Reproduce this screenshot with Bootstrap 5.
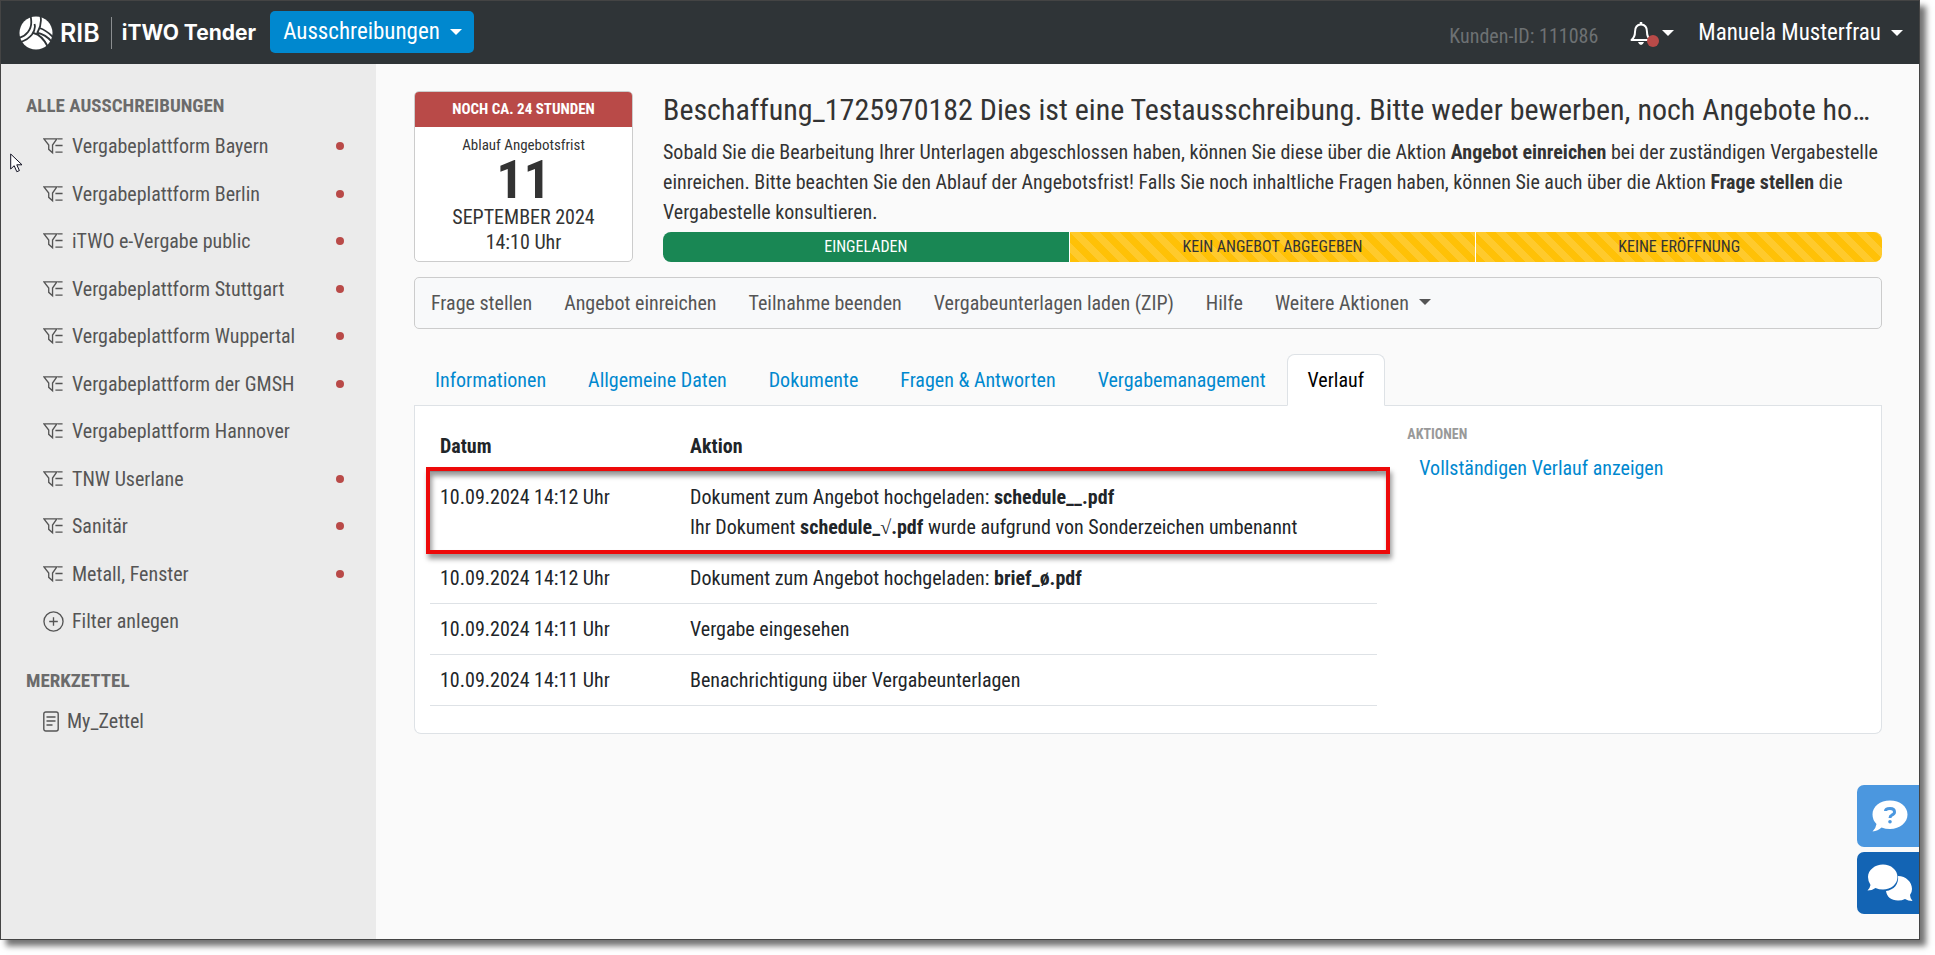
<!DOCTYPE html>
<html lang="de">
<head>
<meta charset="utf-8">
<meta name="viewport" content="width=device-width, initial-scale=1">
<title>iTWO Tender – Verlauf</title>
<link href="https://cdn.jsdelivr.net/npm/bootstrap@5.3.0/dist/css/bootstrap.min.css" rel="stylesheet">
<style>
  :root { --brand: #0088cf; --alarm: #b94a48; }
  html { font-size: 20px; }
  body {
    font-family: "Roboto Condensed", "Liberation Sans Narrow", Roboto, sans-serif;
    line-height: 30px; color: #333; background: #fff;
    min-height: 100vh; padding: 0 15px 15px 0;
  }
  a { color: var(--brand); text-decoration: none; }
  .window-frame { border: 1px solid #444; background: #fafafa; box-shadow: 6px 6px 6px rgba(0,0,0,.55); }
  .dropdown-toggle::after { margin-left: 10px; }

  .topbar { background: #2f3437; height: 63px; padding: 0 16px 0 18px; }
  .brand-rib { font: 600 25px/32px Inter, sans-serif; color: #fff; margin-left: 7px; }
  .brand-product { font: 700 21px/32px Inter, sans-serif; color: #fff; border-left: 1px solid #8b8e90; margin-left: 11px; padding-left: 10px; }
  .topbar .btn, .topbar a { font-size: 23px; line-height: 30px; color: #fff; }
  .topbar .btn-area { background: var(--brand); padding: 5px 11px 5px 12px; border-radius: 5px; height: 42px; margin: 0 0 2px 14px; line-height: 28px; }
  .customer-id { color: #6d7173; padding-top: 7px; margin-right: 32px; }
  .user-menu { margin-left: 24px; }
  .bell-dot { width: 12px; height: 12px; background: var(--alarm); border-radius: 50%; right: -7px; bottom: -2px; }

  .side { width: 375px; background: #ebebeb; padding: 27px 32px 26px 25px; color: #555; }
  .side h2 { font-size: 19px; line-height: 30px; font-weight: 700; color: #6b6b6b; margin: 0; }
  .side h2.side-second { margin-top: 30px; }
  .side a { color: #555; gap: 8px; padding-left: 17px; }
  .filter-list { min-height: 505px; margin-top: 10px; }
  .memo-list { margin-top: 10px; }
  .status-dot { width: 8px; height: 8px; border-radius: 50%; background: var(--alarm); }
  .glyph { fill: none; stroke: #555; stroke-width: 1.4; }

  .main-area { padding: 27px 37px 27px 38px; }
  .deadline { width: 219px; border: 1px solid #ccc; border-radius: 5px; background: #fff; overflow: hidden; text-align: center; }
  .deadline-head { background: var(--alarm); color: #fff; font-weight: 700; font-size: 15px; line-height: 35px; }
  .deadline-label { font-size: 15px; line-height: 20px; padding-top: 8px; }
  .deadline-day { font-size: 54px; font-weight: 700; line-height: 50px; }
  .deadline-line { line-height: 25px; }
  .summary { margin-left: 30px; }
  .summary h1 { font-size: 30px; line-height: 38px; margin: 0 0 8px; font-weight: 400; }
  .phase-bar { height: 30px; border-radius: 8px; font-size: 16px; margin-top: 5px; }
  .phase-bar .progress-bar { flex: 1 1 0; color: #333; border-right: 1px solid #fff; background-size: 20px 20px; }
  .phase-bar .progress-bar:first-child { color: #fff; }
  .phase-bar .progress-bar:last-child { border-right: 0; }

  .action-bar { border: 1px solid #ccc; border-radius: 5px; background: #f8f9fa; margin: 15px 0 25px; }
  .action-bar a { color: #555; padding: 10px 16px; }
  .nav-tabs .nav-link { color: var(--brand); }
  .nav-tabs .nav-link.active { color: #000; }
  .tab-panel { background: #fff; border: 1px solid #dee2e6; border-top: 0; border-radius: 0 0 7px 7px; padding: 15px 15px 27px; }
  .history { color: #212529; margin: 0; }
  .history th { font-weight: 700; }
  .history thead tr > * { border-bottom-color: #dee2e6; }
  .history tbody td:first-child { width: 250px; }
  .root-sign { font-family: "Liberation Serif", serif; font-weight: 400; }
  .highlight { border: 4px solid #ed0909; box-shadow: 2px 5px 5px rgba(0,0,0,.4), inset 2px 5px 5px rgba(0,0,0,.4); inset: -5px -13px -1px -4px; pointer-events: none; }
  .aside-title { font-size: 14px; line-height: 20px; font-weight: 700; color: #999; margin: 3px 0 9px; }
  .aside-link { margin-left: 12px; }
  .help-dock { right: 0; bottom: 25px; gap: 5px; }
  .help-dock button { width: 62px; height: 62px; border: 0; padding: 0 0 0 4px; border-radius: 7px 0 0 7px; background: #4b97df; }
  .help-dock button + button { background: #1364b4; }
</style>
</head>
<body class="d-flex">
<svg class="d-none" aria-hidden="true">
  <symbol id="i-filter" viewBox="0 0 22 18"><path d="M1 1.500h13.500L10 8v8L6 12.500V8zM15.500 1.500h5M13 8.500h7.500M13 15.500h7.500"/></symbol>
</svg>
<div class="window-frame position-relative flex-grow-1 d-flex flex-column">
  <header class="topbar d-flex align-items-center">
    <a class="d-flex align-items-center" href="#" aria-label="RIB iTWO Tender">
      <svg width="34" height="34" viewBox="0 0 34 34">
        <circle cx="17" cy="17" r="16.500" fill="#fff"/>
        <path d="M11.500 0C13 6 12 12 9 16Q5.500 20.500 0 22M21.500 0C23 7 21 12 18.500 16.500M15.500 8Q17 13 13 18.500Q9 23.500 2 26M14.500 17Q23 19 29 31M17.500 16.500Q27 18.500 33 26M20.500 12Q27 14 34 21" fill="none" stroke="#2f3437" stroke-width="1.800"/>
      </svg>
      <span class="brand-rib">RIB</span>
      <span class="brand-product">iTWO Tender</span>
    </a>
    <button type="button" class="btn btn-area dropdown-toggle d-flex align-items-center">Ausschreibungen</button>
    <span class="customer-id ms-auto">Kunden-ID: 111086</span>
    <a class="dropdown-toggle d-flex align-items-center" href="#" aria-label="Benachrichtigungen">
      <span class="position-relative d-flex">
        <svg width="22" height="24" viewBox="0 0 22 24"><path d="M1.500 19Q5 16 5 11C5 6 7 3.500 11 3.500S17 6 17 11Q17 16 20.500 19Z" fill="none" stroke="#fff" stroke-width="2" stroke-linejoin="round"/><path d="M11 1v3" stroke="#fff" stroke-width="2.500"/><path d="M8 21h6q-1 3-3 3t-3-3" fill="#fff"/></svg>
        <span class="bell-dot position-absolute"></span>
      </span>
    </a>
    <a class="user-menu dropdown-toggle d-flex align-items-center" href="#">Manuela Musterfrau</a>
  </header>

  <div class="d-flex flex-grow-1">
    <nav class="side flex-shrink-0" aria-label="Ausschreibungen">
      <h2>ALLE AUSSCHREIBUNGEN</h2>
      <ul class="filter-list list-unstyled d-flex flex-column justify-content-between mb-0">
        <li><a href="#" class="d-flex align-items-center"><svg class="glyph" width="21" height="18"><use href="#i-filter"/></svg><span>Vergabeplattform Bayern</span><i class="status-dot ms-auto"></i></a></li>
        <li><a href="#" class="d-flex align-items-center"><svg class="glyph" width="21" height="18"><use href="#i-filter"/></svg><span>Vergabeplattform Berlin</span><i class="status-dot ms-auto"></i></a></li>
        <li><a href="#" class="d-flex align-items-center"><svg class="glyph" width="21" height="18"><use href="#i-filter"/></svg><span>iTWO e-Vergabe public</span><i class="status-dot ms-auto"></i></a></li>
        <li><a href="#" class="d-flex align-items-center"><svg class="glyph" width="21" height="18"><use href="#i-filter"/></svg><span>Vergabeplattform Stuttgart</span><i class="status-dot ms-auto"></i></a></li>
        <li><a href="#" class="d-flex align-items-center"><svg class="glyph" width="21" height="18"><use href="#i-filter"/></svg><span>Vergabeplattform Wuppertal</span><i class="status-dot ms-auto"></i></a></li>
        <li><a href="#" class="d-flex align-items-center"><svg class="glyph" width="21" height="18"><use href="#i-filter"/></svg><span>Vergabeplattform der GMSH</span><i class="status-dot ms-auto"></i></a></li>
        <li><a href="#" class="d-flex align-items-center"><svg class="glyph" width="21" height="18"><use href="#i-filter"/></svg><span>Vergabeplattform Hannover</span></a></li>
        <li><a href="#" class="d-flex align-items-center"><svg class="glyph" width="21" height="18"><use href="#i-filter"/></svg><span>TNW Userlane</span><i class="status-dot ms-auto"></i></a></li>
        <li><a href="#" class="d-flex align-items-center"><svg class="glyph" width="21" height="18"><use href="#i-filter"/></svg><span>Sanitär</span><i class="status-dot ms-auto"></i></a></li>
        <li><a href="#" class="d-flex align-items-center"><svg class="glyph" width="21" height="18"><use href="#i-filter"/></svg><span>Metall, Fenster</span><i class="status-dot ms-auto"></i></a></li>
        <li><a href="#" class="d-flex align-items-center"><svg class="glyph" width="21" height="21" viewBox="0 0 22 22"><circle cx="11" cy="11" r="10"/><path d="M6.500 11h9M11 6.500v9"/></svg><span>Filter anlegen</span></a></li>
      </ul>
      <h2 class="side-second">MERKZETTEL</h2>
      <ul class="list-unstyled mb-0 memo-list">
        <li><a href="#" class="d-flex align-items-center"><svg class="glyph" width="16" height="21" viewBox="0 0 16 21"><rect x=".8" y="1" width="14.400" height="19" rx="2"/><path d="M3.500 6h9M3.500 10h9M3.500 14h6"/></svg><span>My_Zettel</span></a></li>
      </ul>
    </nav>

    <main class="main-area flex-grow-1">
      <div class="d-flex">
        <section class="deadline flex-shrink-0">
          <div class="deadline-head">NOCH CA. 24 STUNDEN</div>
          <div class="deadline-label">Ablauf Angebotsfrist</div>
          <div class="deadline-day">11</div>
          <div class="deadline-line">SEPTEMBER 2024</div>
          <div class="deadline-line">14:10 Uhr</div>
        </section>
        <section class="summary flex-grow-1">
          <div class="d-grid"><h1 class="text-truncate">Beschaffung_1725970182 Dies ist eine Testausschreibung. Bitte weder bewerben, noch Angebote hochladen</h1></div>
          <p class="mb-0">Sobald Sie die Bearbeitung Ihrer Unterlagen abgeschlossen haben, können Sie diese über die Aktion <b>Angebot einreichen</b> bei der zuständigen Vergabestelle einreichen. Bitte beachten Sie den Ablauf der Angebotsfrist! Falls Sie noch inhaltliche Fragen haben, können Sie auch über die Aktion <b>Frage stellen</b> die Vergabestelle konsultieren.</p>
          <div class="progress phase-bar">
            <div class="progress-bar bg-success">EINGELADEN</div>
            <div class="progress-bar progress-bar-striped bg-warning">KEIN ANGEBOT ABGEGEBEN</div>
            <div class="progress-bar progress-bar-striped bg-warning">KEINE ERÖFFNUNG</div>
          </div>
        </section>
      </div>

      <nav class="action-bar d-flex" aria-label="Aktionen">
        <a href="#">Frage stellen</a><a href="#">Angebot einreichen</a><a href="#">Teilnahme beenden</a><a href="#">Vergabeunterlagen laden (ZIP)</a><a href="#">Hilfe</a><a href="#" class="dropdown-toggle">Weitere Aktionen</a>
      </nav>

      <ul class="nav nav-tabs">
        <li class="nav-item"><a class="nav-link" href="#">Informationen</a></li>
        <li class="nav-item"><a class="nav-link" href="#">Allgemeine Daten</a></li>
        <li class="nav-item"><a class="nav-link" href="#">Dokumente</a></li>
        <li class="nav-item"><a class="nav-link" href="#">Fragen &amp; Antworten</a></li>
        <li class="nav-item"><a class="nav-link" href="#">Vergabemanagement</a></li>
        <li class="nav-item"><a class="nav-link active" aria-current="page" href="#">Verlauf</a></li>
      </ul>
      <div class="tab-panel">
        <div class="row">
          <div class="col-8">
            <table class="table history">
              <thead><tr><th>Datum</th><th>Aktion</th></tr></thead>
              <tbody>
                <tr class="position-relative"><td>10.09.2024 14:12 Uhr</td><td>Dokument zum Angebot hochgeladen: <b>schedule__.pdf</b><br>Ihr Dokument <b>schedule_<span class="root-sign">√</span>.pdf</b> wurde aufgrund von Sonderzeichen umbenannt<span class="highlight position-absolute"></span></td></tr>
                <tr><td>10.09.2024 14:12 Uhr</td><td>Dokument zum Angebot hochgeladen: <b>brief_ø.pdf</b></td></tr>
                <tr><td>10.09.2024 14:11 Uhr</td><td>Vergabe eingesehen</td></tr>
                <tr><td>10.09.2024 14:11 Uhr</td><td>Benachrichtigung über Vergabeunterlagen</td></tr>
              </tbody>
            </table>
          </div>
          <div class="col-4">
            <h3 class="aside-title">AKTIONEN</h3>
            <a href="#" class="aside-link">Vollständigen Verlauf anzeigen</a>
          </div>
        </div>
      </div>
    </main>
  </div>

  <div class="help-dock position-absolute d-flex flex-column">
    <button type="button" aria-label="Hilfe"><svg width="36" height="32" viewBox="0 0 36 32"><path d="M18 0.500C28 .5 35.500 6.500 35.500 14.500S28 29 18 29Q13.500 29 9.500 27.500Q6 31 .5 31.500Q4 28 4.500 24Q.5 20 .5 14.500C.5 6.500 8 .5 18 .5Z" fill="#fff"/><path d="M13.500 11Q13.500 8.500 18 8.500T22.500 12Q22.500 14 20 15Q18 16 18 18" fill="none" stroke="#4b97df" stroke-width="3"/><circle cx="18" cy="21.800" r="1.800" fill="#4b97df"/></svg></button>
    <button type="button" aria-label="Chat"><svg width="46" height="38" viewBox="0 0 46 38"><path d="M31 12C39 12 45 18 45 25Q45 28.500 43 31Q43 34 45.500 37Q41 37 38 35Q35 36.500 31 36.500C24 36.500 20 33 19 27C27 26 32 20 31 12Z" fill="#fff"/><path d="M16 .5C24 .5 30.500 6 30.500 13S24 25.500 16 25.500Q12 25.500 8.500 24Q5 26.500 .5 26.500Q3 24 3.500 21Q1 17.500 1 13C1 6 8 .5 16 .5Z" fill="#fff"/></svg></button>
  </div>

  <!-- Mauszeiger -->
  <svg class="pointer position-absolute" width="13" height="20" viewBox="0 0 13 20" aria-hidden="true" style="left:9px;top:152px"><path d="M.7 1v15l3.500-3.300 2.600 6 2.600-1.100-2.600-5.800H12Z" fill="#fff" stroke="#112" stroke-width="1"/></svg>
</div>
<script src="https://cdn.jsdelivr.net/npm/bootstrap@5.3.0/dist/js/bootstrap.bundle.min.js"></script>
</body>
</html>
